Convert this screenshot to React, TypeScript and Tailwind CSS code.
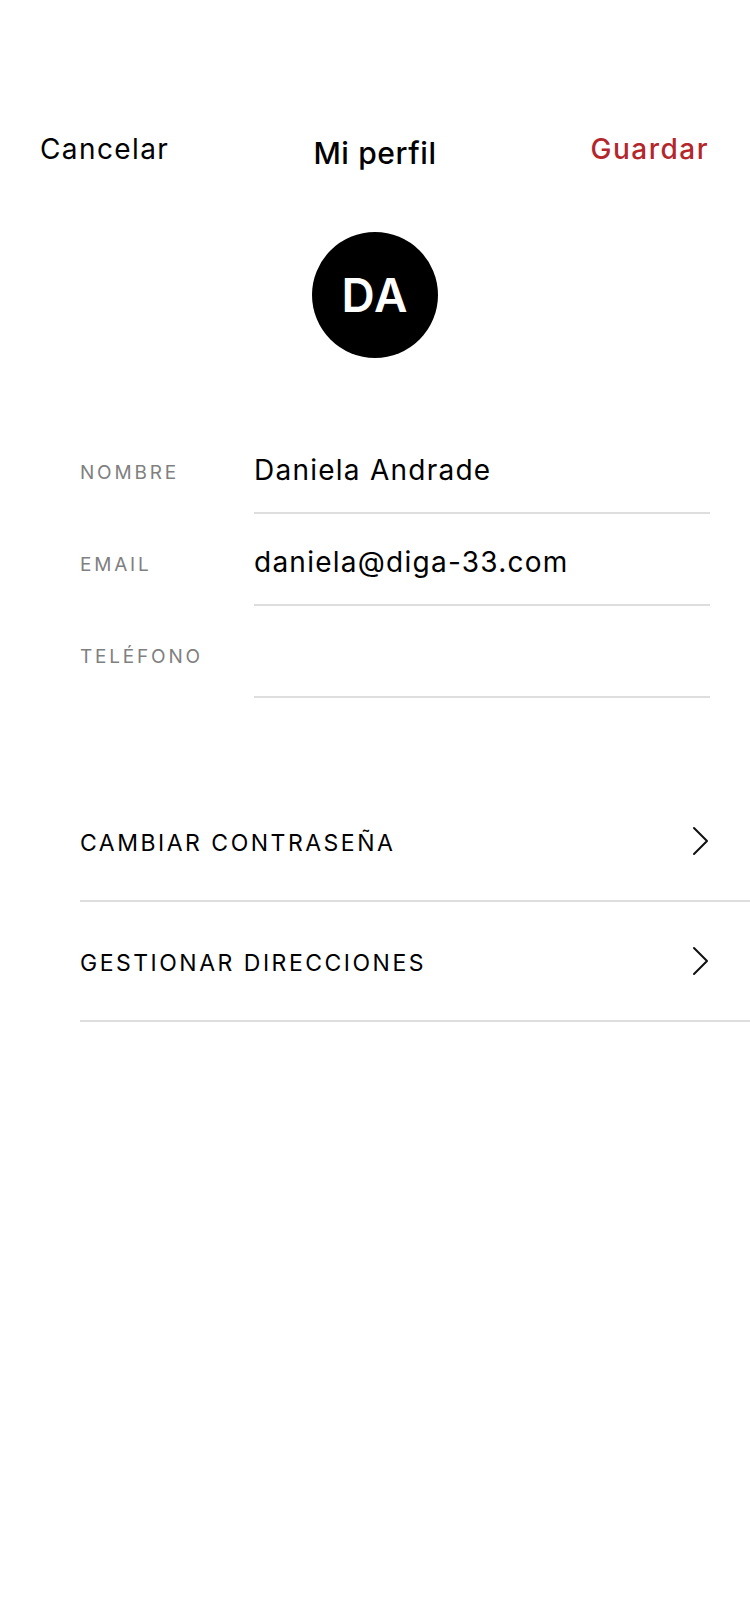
export default function App() {
  const fields = [
    { label: "NOMBRE", value: "Daniela Andrade" },
    { label: "EMAIL", value: "daniela@diga-33.com" },
    { label: "TELÉFONO", value: "" },
  ];
  const links = ["CAMBIAR CONTRASEÑA", "GESTIONAR DIRECCIONES"];

  return (
    <div
      className="w-[750px] min-h-[1624px] bg-white text-black"
      style={{ fontFamily: "Inter, 'Noto Sans', sans-serif" }}
    >
      {/* header */}
      <div className="grid grid-cols-3 items-center px-[40px] pt-[125px] h-[169px]">
        <button className="text-left text-[28px] leading-[40px] tracking-[1.4px]">Cancelar</button>
        <h1 className="text-center text-[30px] leading-[40px] font-medium tracking-[0.6px] mt-[8px]">
          Mi perfil
        </h1>
        <button className="text-right text-[28px] leading-[40px] font-medium tracking-[1.5px] text-[#b3272c] pr-[1px]">
          Guardar
        </button>
      </div>

      {/* avatar */}
      <div className="flex justify-center mt-[63px]">
        <div className="w-[126px] h-[126px] rounded-full bg-black flex items-center justify-center">
          <span className="text-white text-[46px] font-semibold tracking-[1px]">DA</span>
        </div>
      </div>

      {/* fields */}
      <div className="mt-[64px] pl-[80px] pr-[40px]">
        {fields.map((f) => (
          <div key={f.label} className="flex">
            <div className="w-[174px] pt-[37px] text-[19px] leading-[28px] tracking-[2.8px] text-[#808080]">
              {f.label}
            </div>
            <div className="flex-1 h-[92px] border-b-2 border-[#dedede] pt-[30px] text-[28px] leading-[36px] tracking-[1.25px]">
              {f.value}
            </div>
          </div>
        ))}
      </div>

      {/* links */}
      <div className="mt-[84px] pl-[80px]">
        {links.map((l) => (
          <div
            key={l}
            className="flex items-center justify-between h-[120px] pr-[40px] border-b-2 border-[#dedede]"
          >
            <span className="text-[23px] tracking-[2.5px] pt-[4px]">{l}</span>
            <svg width="18" height="30" viewBox="0 0 18 30" fill="none">
              <polyline points="2,2 15,15 2,28" stroke="#111" strokeWidth="2" strokeLinecap="round" strokeLinejoin="round" />
            </svg>
          </div>
        ))}
      </div>
    </div>
  );
}
